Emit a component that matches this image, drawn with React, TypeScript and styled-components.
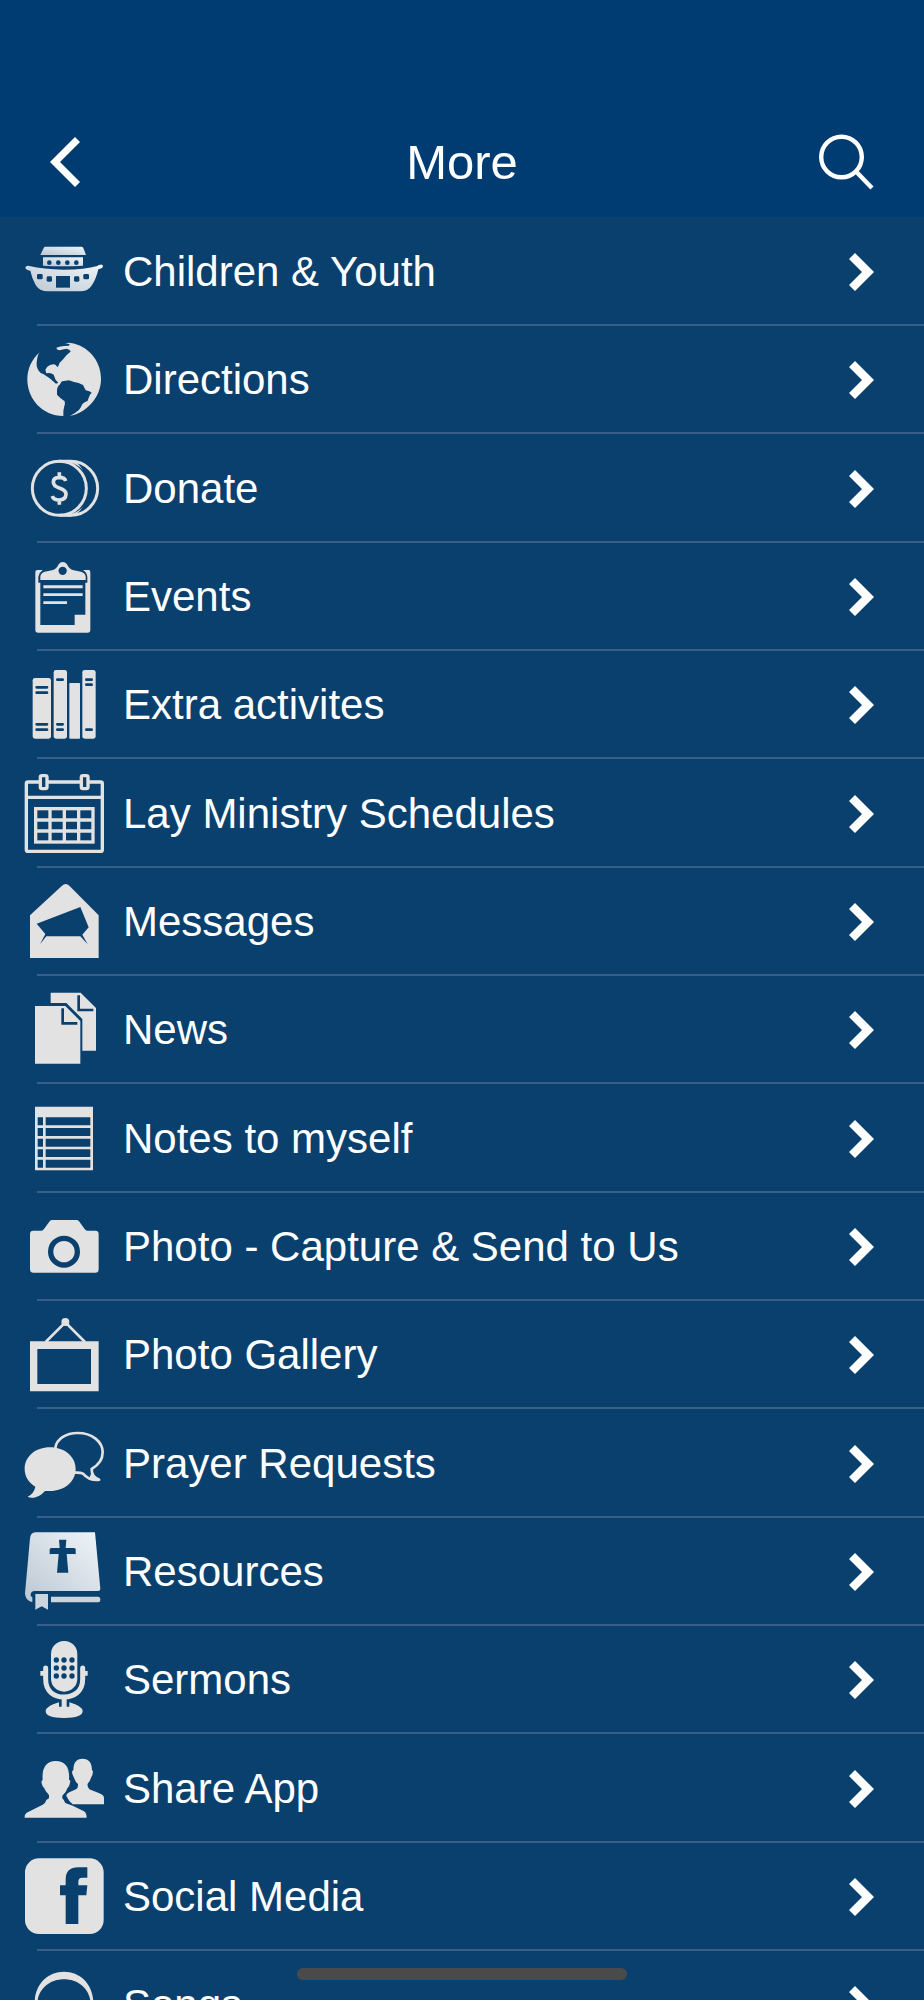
import React from "react";
import styled, { createGlobalStyle } from "styled-components";

const colors = {
  header: "#003c71",
  list: "#0a406e",
  divider: "#375f89",
  icon: "#e2e2e2",
  text: "#ffffff",
  indicator: "#4a4a4a",
};

const GlobalStyle = createGlobalStyle`
  *, *::before, *::after { box-sizing: border-box; }
  body {
    margin: 0;
    background: ${colors.list};
    color: ${colors.text};
    font-family: "Liberation Sans", Arial, Helvetica, sans-serif;
  }
`;

const Screen = styled.div`
  display: flex;
  flex-direction: column;
  height: 100vh;
  background: ${colors.list};
`;

const Header = styled.header`
  flex: none;
  display: grid;
  grid-template-columns: 1fr auto 1fr;
  align-items: center;
  padding: 107px 50px 0;
  background: ${colors.header};
`;

const Title = styled.h1`
  margin: 0;
  font-size: 49px;
  font-weight: 400;
  line-height: 110px;
`;

const IconButton = styled.button<{ $end?: boolean }>`
  display: flex;
  justify-self: ${(p) => (p.$end ? "end" : "start")};
  padding: 0;
  border: 0;
  background: none;
  color: inherit;
  cursor: pointer;
`;

const Menu = styled.ul`
  flex: 1;
  min-height: 0;
  margin: 0;
  padding: 1px 0 0;
  list-style: none;
  overflow-y: auto;
  scrollbar-width: none;
`;

const MenuItem = styled.li`
  height: 108px;
  background: linear-gradient(${colors.divider}, ${colors.divider}) no-repeat 37px 100% / 100% 2px;

  &:nth-child(3n) {
    height: 109px;
  }
`;

const MenuLink = styled.a`
  display: flex;
  align-items: center;
  gap: 19px;
  height: 100%;
  padding: 0 50px 0 24px;
  color: inherit;
  text-decoration: none;
`;

const Label = styled.span`
  flex: 1;
  font-size: 42px;
  line-height: 48px;
  white-space: nowrap;
`;

const ItemIcon = styled.svg`
  flex: none;
  width: 80px;
  height: 80px;
  fill: ${colors.icon};
`;

const Glyph = styled.svg`
  flex: none;
  display: block;
  fill: currentColor;
`;

const HomeIndicator = styled.div`
  position: fixed;
  bottom: 20px;
  left: 50%;
  width: 330px;
  height: 12px;
  margin-left: -165px;
  border-radius: 6px;
  background: ${colors.indicator};
`;

const cut = colors.list;

const Shine = ({ id }: { id: string }) => (
  <linearGradient id={id} x1="0" y1="1" x2="1" y2="0">
    <stop offset="0" stopColor="#bcc7d2" />
    <stop offset="1" stopColor="#eff5f9" />
  </linearGradient>
);

const Ark = () => (
  <ItemIcon viewBox="42 36 240 240" aria-hidden>
    <defs><Shine id="ark" /></defs>
    <g fill="url(#ark)">
      <path d="M106 80H214Q218 80 220 84L228 105H91L101 84Q103 80 106 80Z" />
      <path d="M99 112H219V137Q159 141 99 137Z" />
      <path d="M46 142Q50 135 58 138Q100 148 160 149Q225 149 262 138Q265 134 271 134Q279 133 279 139Q279 145 271 146L265 148Q258 179 244 198Q234 214 210 214H114Q88 214 77 195Q66 176 61 152Q46 151 46 142Z" />
    </g>
    <g fill={cut}>
      {[118, 145, 172, 199].map((x) => <circle key={x} cx={x} cy="128" r="7" />)}
      <rect x="138" y="168" width="42" height="35" />
      <rect x="81" y="162" width="17" height="16" rx="4" />
      <rect x="110" y="169" width="16" height="16" rx="4" />
      <rect x="192" y="169" width="16" height="16" rx="4" />
      <rect x="220" y="162" width="17" height="16" rx="4" />
    </g>
  </ItemIcon>
);

const Globe = () => (
  <ItemIcon viewBox="42 360 240 240" aria-hidden>
    <path d="M165 370Q177 367 182 369C232 376 273 420 273 477C273 533 229 578 180 588L196 578Q208 572 213 561Q217 549 226 546Q235 543 236 534Q238 524 245 518Q240 513 227 511L219 495Q206 487 192 486L177 481L161 483Q153 483 151 492Q140 501 141 513L141 524Q152 536 164 544Q166 551 163 558Q159 572 160 588C97 588 52 537 52 478C52 447 65 418 89 397Q83 403 81 420Q77 440 86 452Q92 461 101 463L119 475L138 491L145 488L137 480L131 464Q123 457 109 460L106 450Q111 438 121 435Q132 431 137 435L143 442Q146 436 149 428Q158 420 168 407Q175 400 182 395Q180 388 169 386L148 391Q139 389 139 383Q151 379 163 378L177 377L179 372Z" />
  </ItemIcon>
);

const Coins = () => (
  <ItemIcon viewBox="42 25 240 240" aria-hidden>
    <g fill="none" stroke={colors.icon} strokeWidth="9">
      <circle cx="148" cy="143" r="81" />
      <path d="M148 62H182A81 81 0 0 1 182 224H148" />
      <path strokeWidth="11" d="M167 121Q164 110 148 110Q130 111 130 124Q130 136 148 142Q168 148 168 161Q167 177 148 178Q130 178 127 166M148 95V111M148 177V192" />
    </g>
    <path d="M160 60Q200 66 219 88Q204 64 180 58ZM160 226Q200 220 219 198Q204 222 180 228Z" />
  </ItemIcon>
);

const Clipboard = () => (
  <ItemIcon viewBox="42 351 240 240" aria-hidden>
    <path d="M82 390H98Q88 397 85 410V428H91V555H194V524H226V428H232V410Q230 397 219 390H236Q241 390 241 396V571Q241 578 234 578H83Q76 578 76 571V396Q76 390 82 390Z" />
    <path fillRule="evenodd" d="M91 420V409Q93 398 104 395L126 391Q141 387 146 373Q151 366 158 366Q166 366 171 373Q176 387 191 391L213 395Q225 398 227 409V420ZM158 380A12 12 0 1 0 158 405A12 12 0 1 0 158 380Z" />
    <path d="M100 436H218V445H100ZM100 460H218V468H100ZM100 484H171V492H100Z" />
  </ItemIcon>
);

const Books = () => (
  <ItemIcon viewBox="42 45 240 240" aria-hidden>
    <rect x="68" y="84" width="55" height="182" rx="7" />
    <rect x="131" y="60" width="40" height="206" rx="7" />
    <rect x="178" y="99" width="32" height="167" rx="2" />
    <rect x="217" y="60" width="40" height="206" rx="7" />
    <path
      fill="none"
      stroke={cut}
      strokeWidth="8"
      strokeLinecap="round"
      d="M80 112H111M80 128H111M80 223H111M80 239H111M142 89H158M142 223H158M142 239H158M229 89H245M229 104H245M229 239H245"
    />
  </ItemIcon>
);

const CalendarGrid = () => (
  <ItemIcon viewBox="42 370 240 240" aria-hidden>
    <g fill="none" stroke={colors.icon} strokeWidth="10">
      <path d="M88 394H54Q49 394 49 399V597Q49 602 54 602H272Q277 602 277 597V399Q277 394 272 394H237M114 394H211M49 440H277" />
      <rect x="91" y="375" width="20" height="39" rx="5" />
      <rect x="214" y="375" width="20" height="39" rx="5" />
      <rect x="77" y="474" width="172" height="100" />
      <path d="M120 474V574M163 474V574M206 474V574M77 508H249M77 541H249" />
    </g>
  </ItemIcon>
);

const OpenMail = () => (
  <ItemIcon viewBox="42 36 240 240" aria-hidden>
    <path d="M60 136L156 47Q167 37 178 47L266 136V264H60Z" />
    <path fill={cut} d="M80 161L211 111L236 172L217 194L233 223L211 199H109L90 223L106 192Z" />
  </ItemIcon>
);

const Pages = () => (
  <ItemIcon viewBox="42 360 240 240" aria-hidden>
    <path d="M122 368H212L258 414V542H217V447L169 399H122Z" />
    <path d="M75 408H166L211 453V581H75Z" />
    <path fill="none" stroke={cut} strokeWidth="8" d="M206 376V420H250M158 415V460H202" />
  </ItemIcon>
);

const Notes = () => (
  <ItemIcon viewBox="42 25 240 240" aria-hidden>
    <path d="M75 48H249V80H75Z" />
    <path
      fill="none"
      stroke={colors.icon}
      strokeWidth="8"
      d="M79 76V235H245V76M103 78V235M79 108H245M79 140H245M79 172H245M79 203H245"
    />
  </ItemIcon>
);

const Camera = () => (
  <ItemIcon viewBox="42 351 240 240" aria-hidden>
    <path d="M70 422H94Q99 422 102 417L119 394Q122 390 127 390H199Q204 390 207 394L224 417Q227 422 232 422H256Q266 422 266 432V538Q266 548 256 548H70Q60 548 60 538V432Q60 422 70 422Z" />
    <circle cx="162" cy="485" r="40" fill="none" stroke={cut} strokeWidth="16" />
  </ItemIcon>
);

const Frame = () => (
  <ItemIcon viewBox="42 45 240 240" aria-hidden>
    <path fillRule="evenodd" d="M60 124H266V274H60ZM82 147V252H243V147Z" />
    <path fill="none" stroke={colors.icon} strokeWidth="8" d="M107 126L166 67L225 126" />
    <circle cx="166" cy="66" r="12" />
  </ItemIcon>
);

const Bubbles = () => (
  <ItemIcon viewBox="42 370 240 240" aria-hidden>
    <path d="M120 440C164 440 197 468 197 505C197 543 163 571 120 571H105Q90 588 72 591Q58 592 53 588Q72 579 76 558C54 545 44 526 44 505C44 468 76 440 120 440Z" />
    <path
      fill="none"
      stroke={colors.icon}
      strokeWidth="8"
      d="M136 442C139 415 168 397 203 397C246 397 278 423 278 455C278 476 266 493 245 505Q244 529 268 537Q239 542 219 519Q211 515 195 516"
    />
    <path d="M245 513Q250 530 271 535V540Q251 543 237 536Z" />
  </ItemIcon>
);

const Bible = () => (
  <ItemIcon viewBox="42 36 240 240" aria-hidden>
    <defs><Shine id="bible" /></defs>
    <path fill="url(#bible)" d="M76 37H255L271 206Q271 213 264 213H72Q61 214 62 228L67 232V247Q45 241 45 220L60 55Q62 37 76 37Z" />
    <path fill="#cbd5de" d="M76 222H114V269L95 259L76 269ZM123 230H265Q271 230 271 238Q271 247 265 247H123Z" />
    <path fill={cut} d="M147 59H169L167 84H192L197 86V103L192 102H170L175 158H141L146 102H124L119 103V86L124 84H149Z" />
  </ItemIcon>
);

const Microphone = () => (
  <ItemIcon viewBox="42 360 240 240" aria-hidden>
    <rect x="123" y="363" width="79" height="152" rx="39" />
    <path
      fill="none"
      stroke={colors.icon}
      strokeWidth="15"
      strokeLinecap="round"
      d="M107 444V478C107 515 133 531 162 531S218 515 218 478V444"
    />
    <path d="M91 453H103V467H91ZM221 453H233V467H221ZM155 533H170V560H178V547Q218 558 218 574Q217 594 162 594T107 574Q107 558 147 547V560H155Z" />
    <g fill={cut}>
      {[420, 444, 468].map((y) =>
        [139, 162, 186].map((x) => <circle key={`${x}-${y}`} cx={x} cy={y} r="8" />)
      )}
    </g>
  </ItemIcon>
);

const People = () => (
  <ItemIcon viewBox="42 55 240 240" aria-hidden>
    <path d="M187 130L186 122L190 119C190 96 199 84 217 84C237 84 246 97 246 119L249 122L247 134L243 141Q240 153 233 159Q231 169 238 176L268 188Q282 193 282 202V221H188Q176 211 169 196Q168 189 178 185L198 176Q205 171 204 160Q196 154 192 141Z" />
    <path d="M44 261Q43 250 53 245L98 222Q107 217 109 208L117 203V193Q106 182 102 171Q97 168 94 153L98 147C95 110 110 91 137 91C166 91 180 110 177 147L181 150Q179 166 173 171Q169 184 157 195V203Q163 209 166 217L188 225L222 242Q230 247 230 261Z" />
  </ItemIcon>
);

const Facebook = () => (
  <ItemIcon viewBox="42 381 240 240" aria-hidden>
    <rect x="45" y="385" width="236" height="227" rx="42" />
    <path fill={cut} d="M167 582V496H150V466H167V448Q167 412 205 412H232V443H217Q205 443 205 455V466H232L229 496H205V582Z" />
  </ItemIcon>
);

const Headphones = () => (
  <ItemIcon viewBox="42 705 240 240" aria-hidden>
    <path d="M74 820C74 764 112 725 162 725S250 764 250 820V880H242V820C240 778 206 748 162 748S84 778 82 820V880H74Z" />
  </ItemIcon>
);

const items: { label: string; Icon: React.FC }[] = [
  { label: "Children & Youth", Icon: Ark },
  { label: "Directions", Icon: Globe },
  { label: "Donate", Icon: Coins },
  { label: "Events", Icon: Clipboard },
  { label: "Extra activites", Icon: Books },
  { label: "Lay Ministry Schedules", Icon: CalendarGrid },
  { label: "Messages", Icon: OpenMail },
  { label: "News", Icon: Pages },
  { label: "Notes to myself", Icon: Notes },
  { label: "Photo - Capture & Send to Us", Icon: Camera },
  { label: "Photo Gallery", Icon: Frame },
  { label: "Prayer Requests", Icon: Bubbles },
  { label: "Resources", Icon: Bible },
  { label: "Sermons", Icon: Microphone },
  { label: "Share App", Icon: People },
  { label: "Social Media", Icon: Facebook },
  { label: "Songs", Icon: Headphones },
];

export default function App() {
  return (
    <Screen>
      <GlobalStyle />
      <Header>
        <IconButton type="button" aria-label="Back">
          <Glyph width="30" height="50" viewBox="0 0 30 50">
            <path d="M25 0L30 5L10 25L30 45L25 50L0 25Z" />
          </Glyph>
        </IconButton>
        <Title>More</Title>
        <IconButton type="button" aria-label="Search" $end>
          <Glyph width="56" height="56" viewBox="0 0 56 56">
            <g fill="none" stroke="currentColor" strokeWidth="4.4">
              <circle cx="23.5" cy="23" r="20.3" />
              <path d="M38 37.500L54 54" />
            </g>
          </Glyph>
        </IconButton>
      </Header>
      <Menu>
        {items.map(({ label, Icon }) => (
          <MenuItem key={label}>
            <MenuLink href="#">
              <Icon />
              <Label>{label}</Label>
              <Glyph width="25" height="38" viewBox="0 0 25 38" aria-hidden>
                <path d="M6 0L25 19L6 38L0 32L13 19L0 6Z" />
              </Glyph>
            </MenuLink>
          </MenuItem>
        ))}
      </Menu>
      <HomeIndicator />
    </Screen>
  );
}
